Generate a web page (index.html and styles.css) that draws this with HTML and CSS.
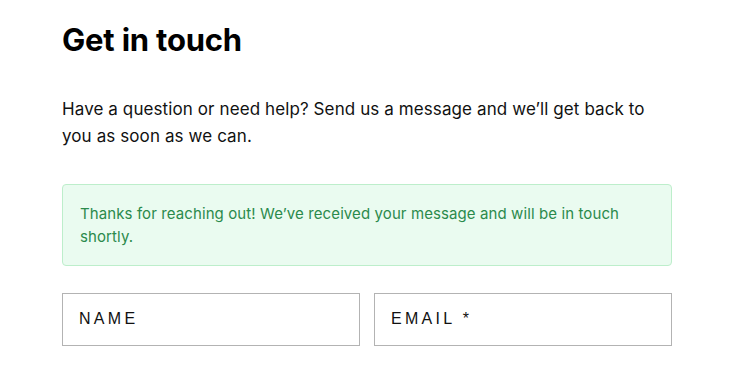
FILE: index.html
```html
<!DOCTYPE html>
<html lang="en">
<head>
    <meta charset="UTF-8">
    <meta name="viewport" content="width=device-width, initial-scale=1.0">
    <title>Contact</title>
    <link rel="stylesheet" href="styles.css">
</head>
<body>

    <div class="contact">
        <h1>Get in touch</h1>
        <p class="intro">Have a question or need help? Send us a message and we’ll get back to you as soon as we can.</p>

        <div class="alert-success">
            Thanks for reaching out! We’ve received your message and will be in touch shortly.
        </div>

        <form class="contact-form">
            <div class="row">
                <input type="text" class="field" placeholder="NAME">
                <input type="email" class="field" placeholder="EMAIL *">
            </div>
        </form>
    </div>

</body>
</html>
```

FILE: styles.css
```css
body {
    margin: 0;
    font-family: Inter, "Noto Sans", sans-serif;
    color: #111;
    background: #fff;
}

.contact {
    width: 610px;
    margin-left: 62px;
    padding-top: 22px;
}

h1 {
    margin: 0;
    font-size: 31px;
    font-weight: 700;
    line-height: 36px;
    letter-spacing: -0.2px;
    color: #000;
}

.intro {
    margin: 38px 0 0;
    font-size: 17px;
    line-height: 27px;
    letter-spacing: 0.1px;
}

.alert-success {
    margin-top: 34px;
    padding: 17px 17px;
    background: #eafbf0;
    border: 1px solid #bdeecb;
    border-radius: 4px;
    color: #2b8a4c;
    font-size: 15px;
    line-height: 23px;
    letter-spacing: 0.1px;
}

.contact-form {
    margin-top: 27px;
}

.row {
    display: grid;
    grid-template-columns: 1fr 1fr;
    gap: 14px;
}

.field {
    box-sizing: border-box;
    height: 53px;
    padding: 0 16px 2px;
    border: 1px solid #b3b3b3;
    border-radius: 0;
    font-family: "Liberation Sans", Arial, sans-serif;
    font-size: 16px;
    letter-spacing: 3.3px;
    outline: none;
}

.field::placeholder {
    color: #111;
    opacity: 1;
}
```
